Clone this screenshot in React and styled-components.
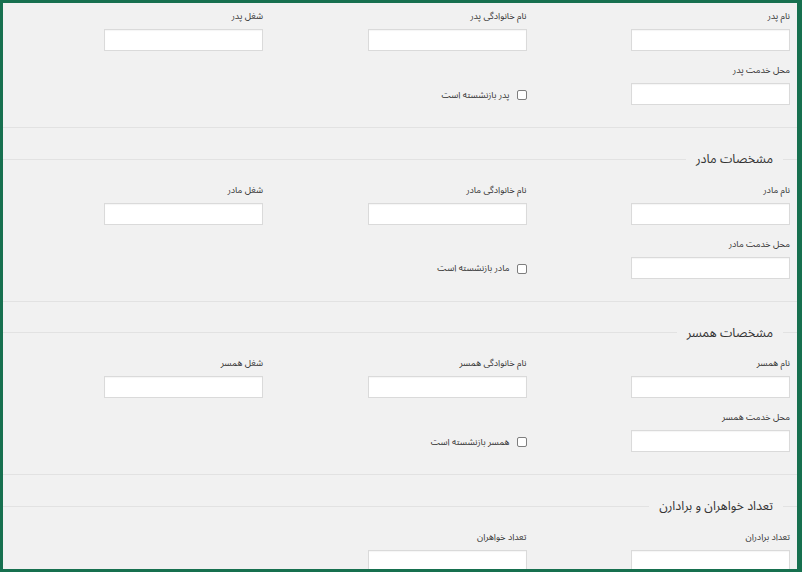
import React from "react";
import styled, { createGlobalStyle } from "styled-components";

const Global = createGlobalStyle`
  html, body { margin: 0; padding: 0; background: #f1f1f1; }
  body { font-family: "Noto Sans Arabic", "DejaVu Sans", sans-serif; overflow: hidden; }
`;

const Frame = styled.div`
  box-sizing: border-box;
  width: 802px;
  height: 572px;
  overflow: hidden;
  border: 3px solid #17704f;
  border-right-width: 5px;
  background: #f1f1f1;
  padding-top: 6px;
  direction: rtl;
`;

const Grid = styled.div`
  display: grid;
  grid-template-columns: 263.5px 263.5px 1fr;
  row-gap: 12px;
  padding-right: 7px;
`;

const Field = styled.div`
  display: flex;
  flex-direction: column;
  align-items: flex-start;
`;

const Label = styled.label`
  font-size: 9px;
  line-height: 16px;
  height: 16px;
  margin-bottom: 4px;
  color: #333;
  white-space: nowrap;
`;

const Input = styled.input`
  box-sizing: border-box;
  width: 159px;
  height: 22px;
  margin: 0;
  border: 1px solid #dadada;
  background: #fff;
  box-shadow: inset 0 1px 1px rgba(0, 0, 0, 0.04);
  outline: none;
`;

const CheckCell = styled.label`
  display: flex;
  align-items: center;
  gap: 7px;
  padding-top: 27px;
  height: 10px;
  font-size: 9px;
  color: #333;
  white-space: nowrap;
`;

const Box = styled.input.attrs({ type: "checkbox" })`
  appearance: none;
  box-sizing: border-box;
  width: 10px;
  height: 10px;
  margin: 0;
  border: 1px solid #7e7e7e;
  border-radius: 2px;
  background: #fff;
  flex: none;
`;

const Divider = styled.div`
  height: 1px;
  background: #e2e2e2;
  margin-top: 22px;
`;

const LegendRow = styled.div`
  display: flex;
  align-items: center;
  height: 16px;
  margin-top: 23px;
  margin-bottom: 15.67px;
`;

const LegendLine = styled.div`
  height: 1px;
  background: #e2e2e2;
  flex: ${(p) => (p.$grow ? "1 1 auto" : "0 0 14px")};
`;

const LegendText = styled.span`
  padding: 0 10px;
  font-size: 12.5px;
  line-height: 16px;
  color: #333;
  white-space: nowrap;
`;

const sections = [
  { title: null, who: "پدر" },
  { title: "مشخصات مادر", who: "مادر" },
  { title: "مشخصات همسر", who: "همسر" },
];

function TextField({ label }) {
  return (
    <Field>
      <Label>{label}</Label>
      <Input type="text" />
    </Field>
  );
}

function Legend({ children }) {
  return (
    <LegendRow>
      <LegendLine />
      <LegendText>{children}</LegendText>
      <LegendLine $grow />
    </LegendRow>
  );
}

function PersonSection({ who }) {
  return (
    <Grid>
      <TextField label={`نام ${who}`} />
      <TextField label={`نام خانوادگی ${who}`} />
      <TextField label={`شغل ${who}`} />
      <TextField label={`محل خدمت ${who}`} />
      <Field>
        <CheckCell>
          <Box />
          <span>{`${who} بازنشسته است`}</span>
        </CheckCell>
      </Field>
    </Grid>
  );
}

export default function App() {
  return (
    <>
      <Global />
      <Frame>
        {sections.map((s, i) => (
          <React.Fragment key={s.who}>
            {i > 0 && <Divider />}
            {s.title && <Legend>{s.title}</Legend>}
            <PersonSection who={s.who} />
          </React.Fragment>
        ))}
        <Divider />
        <Legend>تعداد خواهران و برادارن</Legend>
        <Grid>
          <TextField label="تعداد برادران" />
          <TextField label="تعداد خواهران" />
        </Grid>
      </Frame>
    </>
  );
}
